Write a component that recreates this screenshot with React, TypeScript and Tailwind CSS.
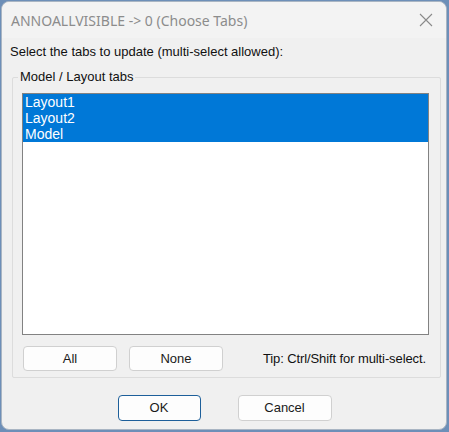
const TABS = ["Layout1", "Layout2", "Model"];

function Btn({ label, className }: { label: string; className: string }) {
  return (
    <button
      className={`flex items-center justify-center rounded-[4px] bg-[#fdfdfd] text-[13px] text-[#1a1a1a] ${className}`}
    >
      {label}
    </button>
  );
}

export default function App() {
  return (
    <div
      className="h-[432px] w-[449px] bg-[#6d8fb8] pl-[1px] pt-[1px]"
      style={{ fontFamily: '"Liberation Sans", Arial, sans-serif' }}
    >
      <div className="flex h-[429px] w-[446px] flex-col rounded-[8px] border border-[#a9b5c3] bg-[#f0f0f0]">
        {/* title bar */}
        <div className="flex h-[36px] items-center justify-between rounded-t-[8px] bg-[#f3f3f3] pl-[9px] pr-[12px]">
          <span
            className="text-[14px] text-[#8c8c8c]"
            style={{ fontFamily: '"Noto Sans", "Open Sans", sans-serif' }}
          >
            ANNOALLVISIBLE -&gt; 0 (Choose Tabs)
          </span>
          <svg width="14" height="14" viewBox="0 0 14 14" className="mr-[1px]">
            <path d="M1 1 L13 13 M13 1 L1 13" stroke="#8a8a8a" strokeWidth="1.1" fill="none" />
          </svg>
        </div>

        <div className="pl-[8px]">
          <p className="mt-[6px] text-[13px] leading-[15px] text-[#111]">
            Select the tabs to update (multi-select allowed):
          </p>

          {/* group box */}
          <div className="relative mt-[18px] ml-[2px] h-[301px] w-[429px] rounded-[2px] border border-[#dcdcdc] pl-[9px] pt-[15px]">
            <span className="absolute left-[5px] top-[-9px] bg-[#f0f0f0] px-[2px] text-[13px] leading-[15px] text-[#111]">
              Model / Layout tabs
            </span>
            <div className="h-[242px] w-[407px] border border-[#828282] bg-white">
              {TABS.map((t) => (
                <div
                  key={t}
                  className="h-[16px] bg-[#0078d7] pl-[2px] text-[14px] leading-[16px] text-white"
                >
                  {t}
                </div>
              ))}
            </div>
            <div className="mt-[11px] flex w-[407px] items-center">
              <Btn label="All" className="ml-[1px] h-[25px] w-[94px] border border-[#d0d0d0]" />
              <Btn label="None" className="ml-[12px] h-[25px] w-[94px] border border-[#d0d0d0]" />
              <span className="ml-auto mr-[3px] text-[13px] tracking-[-0.1px] text-[#111]">
                Tip: Ctrl/Shift for multi-select.
              </span>
            </div>
          </div>
        </div>

        <div className="mt-[17px] flex justify-center gap-[37px] pl-[1px]">
          <Btn label="OK" className="h-[26px] w-[83px] border border-[#1d5f9a]" />
          <Btn label="Cancel" className="h-[26px] w-[94px] border border-[#d0d0d0]" />
        </div>
      </div>
    </div>
  );
}
